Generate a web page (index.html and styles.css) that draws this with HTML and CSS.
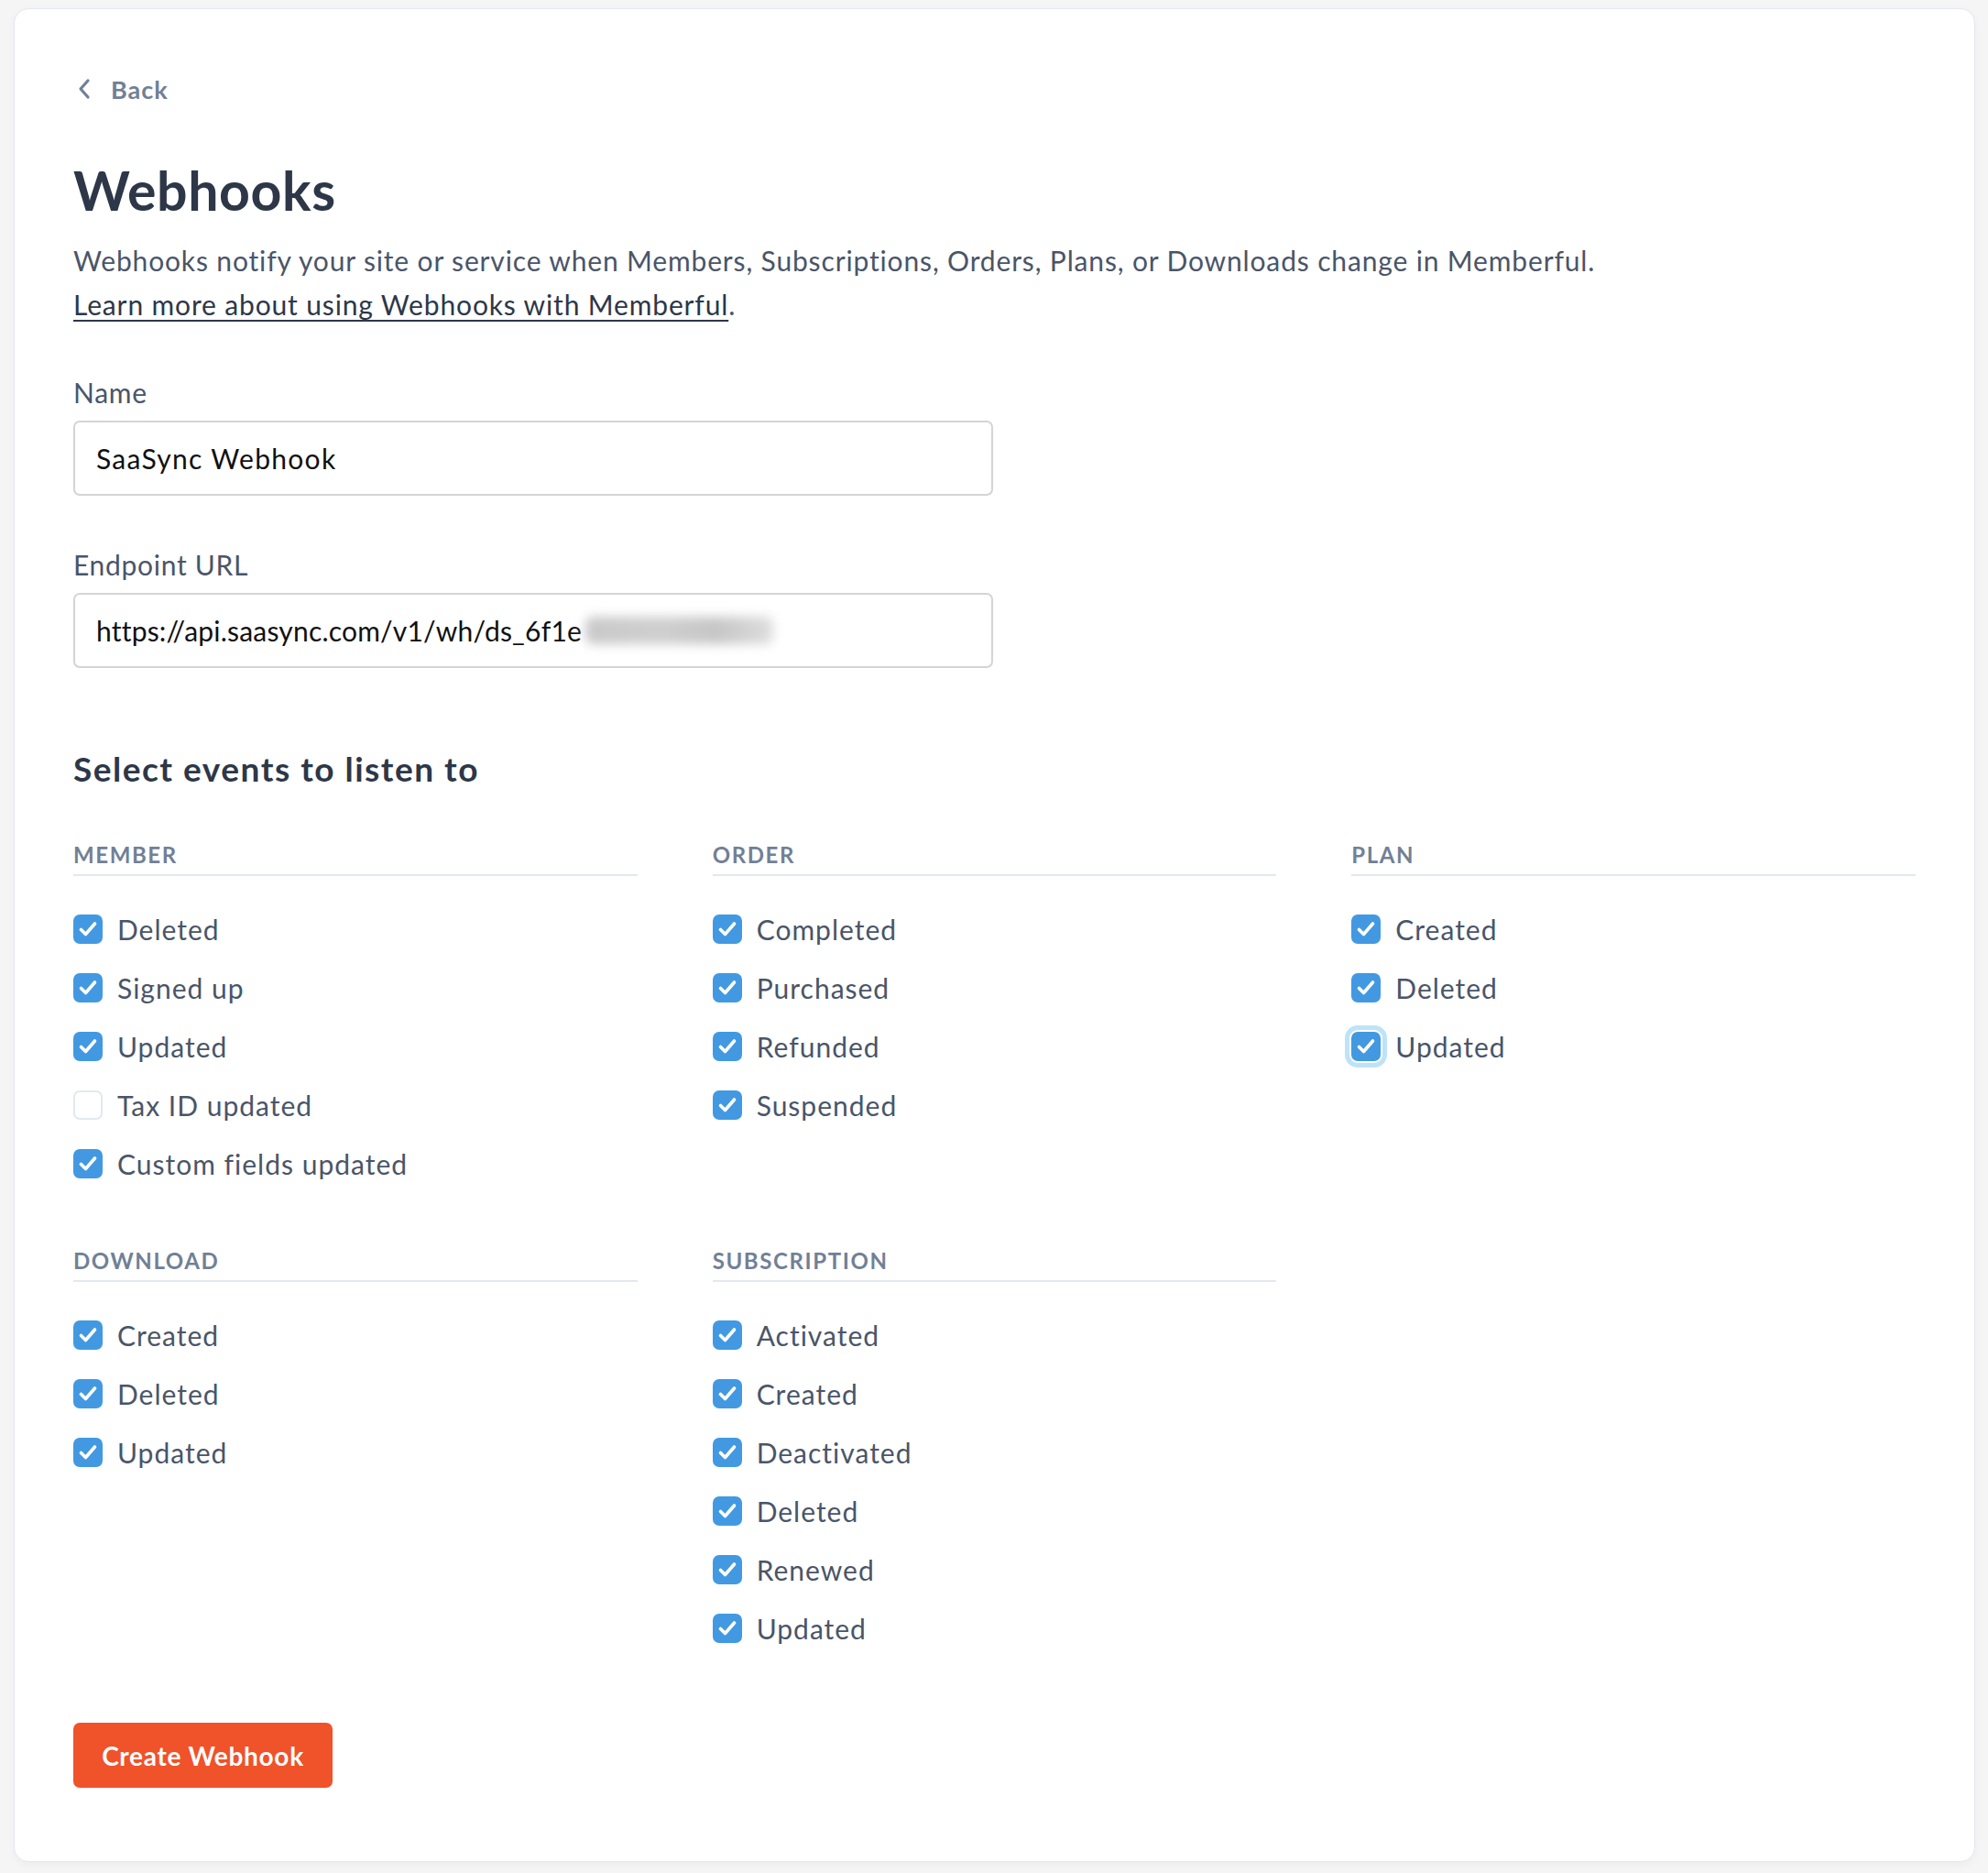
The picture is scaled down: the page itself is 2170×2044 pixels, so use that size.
FILE: index.html
```html
<!DOCTYPE html>
<html lang="en">
<head>
    <meta charset="UTF-8">
    <meta name="viewport" content="width=device-width, initial-scale=1.0">
    <link rel="stylesheet" href="styles.css">
    <title>Webhooks</title>
</head>
<body>
    <div class="card">
        <a class="back" href="#">
            <svg width="18" height="24" viewBox="0 0 18 24"><path d="M13 3 L5 12 L13 21" fill="none" stroke="#718096" stroke-width="3.2" stroke-linecap="round" stroke-linejoin="round"/></svg>
            Back
        </a>

        <h1>Webhooks</h1>
        <p class="intro">
            Webhooks notify your site or service when Members, Subscriptions, Orders, Plans, or Downloads change in Memberful.<br>
            <a href="#">Learn more about using Webhooks with Memberful</a>.
        </p>

        <form>
            <div class="field">
                <label>Name</label>
                <div class="input input-name">SaaSync Webhook</div>
            </div>
            <div class="field field-url">
                <label>Endpoint URL</label>
                <div class="input input-url">https://api.saasync.com/v1/wh/ds_6f1e<span class="blurred"></span></div>
            </div>

            <h2>Select events to listen to</h2>

            <div class="events">
                <div class="group">
                    <h3>Member</h3>
                    <div class="row"><span class="box on"><svg viewBox="0 0 32 32"><path d="M8.5 16.5 L13.5 21.5 L23.5 10"/></svg></span>Deleted</div>
                    <div class="row"><span class="box on"><svg viewBox="0 0 32 32"><path d="M8.5 16.5 L13.5 21.5 L23.5 10"/></svg></span>Signed up</div>
                    <div class="row"><span class="box on"><svg viewBox="0 0 32 32"><path d="M8.5 16.5 L13.5 21.5 L23.5 10"/></svg></span>Updated</div>
                    <div class="row"><span class="box"></span>Tax ID updated</div>
                    <div class="row"><span class="box on"><svg viewBox="0 0 32 32"><path d="M8.5 16.5 L13.5 21.5 L23.5 10"/></svg></span>Custom fields updated</div>
                </div>
                <div class="group">
                    <h3>Order</h3>
                    <div class="row"><span class="box on"><svg viewBox="0 0 32 32"><path d="M8.5 16.5 L13.5 21.5 L23.5 10"/></svg></span>Completed</div>
                    <div class="row"><span class="box on"><svg viewBox="0 0 32 32"><path d="M8.5 16.5 L13.5 21.5 L23.5 10"/></svg></span>Purchased</div>
                    <div class="row"><span class="box on"><svg viewBox="0 0 32 32"><path d="M8.5 16.5 L13.5 21.5 L23.5 10"/></svg></span>Refunded</div>
                    <div class="row"><span class="box on"><svg viewBox="0 0 32 32"><path d="M8.5 16.5 L13.5 21.5 L23.5 10"/></svg></span>Suspended</div>
                </div>
                <div class="group">
                    <h3>Plan</h3>
                    <div class="row"><span class="box on"><svg viewBox="0 0 32 32"><path d="M8.5 16.5 L13.5 21.5 L23.5 10"/></svg></span>Created</div>
                    <div class="row"><span class="box on"><svg viewBox="0 0 32 32"><path d="M8.5 16.5 L13.5 21.5 L23.5 10"/></svg></span>Deleted</div>
                    <div class="row"><span class="box on focus"><svg viewBox="0 0 32 32"><path d="M8.5 16.5 L13.5 21.5 L23.5 10"/></svg></span>Updated</div>
                </div>
                <div class="group">
                    <h3>Download</h3>
                    <div class="row"><span class="box on"><svg viewBox="0 0 32 32"><path d="M8.5 16.5 L13.5 21.5 L23.5 10"/></svg></span>Created</div>
                    <div class="row"><span class="box on"><svg viewBox="0 0 32 32"><path d="M8.5 16.5 L13.5 21.5 L23.5 10"/></svg></span>Deleted</div>
                    <div class="row"><span class="box on"><svg viewBox="0 0 32 32"><path d="M8.5 16.5 L13.5 21.5 L23.5 10"/></svg></span>Updated</div>
                </div>
                <div class="group">
                    <h3>Subscription</h3>
                    <div class="row"><span class="box on"><svg viewBox="0 0 32 32"><path d="M8.5 16.5 L13.5 21.5 L23.5 10"/></svg></span>Activated</div>
                    <div class="row"><span class="box on"><svg viewBox="0 0 32 32"><path d="M8.5 16.5 L13.5 21.5 L23.5 10"/></svg></span>Created</div>
                    <div class="row"><span class="box on"><svg viewBox="0 0 32 32"><path d="M8.5 16.5 L13.5 21.5 L23.5 10"/></svg></span>Deactivated</div>
                    <div class="row"><span class="box on"><svg viewBox="0 0 32 32"><path d="M8.5 16.5 L13.5 21.5 L23.5 10"/></svg></span>Deleted</div>
                    <div class="row"><span class="box on"><svg viewBox="0 0 32 32"><path d="M8.5 16.5 L13.5 21.5 L23.5 10"/></svg></span>Renewed</div>
                    <div class="row"><span class="box on"><svg viewBox="0 0 32 32"><path d="M8.5 16.5 L13.5 21.5 L23.5 10"/></svg></span>Updated</div>
                </div>
            </div>

            <button type="button" class="submit">Create Webhook</button>
        </form>
    </div>
</body>
</html>
```

FILE: styles.css
```css
* {
    margin: 0;
    padding: 0;
    box-sizing: border-box;
}

body {
    background-color: #f5f5f6;
    font-family: Lato, "Open Sans", sans-serif;
    color: #4a5568;
    padding: 9px 14px 12px 15px;
}

.card {
    background-color: #fff;
    border: 1px solid #e3e8f0;
    border-radius: 16px;
    box-shadow: 0 3px 8px rgba(0, 0, 0, 0.04);
    padding: 67px 64px 80px 64px;
}

.back {
    display: flex;
    align-items: center;
    height: 40px;
    color: #718096;
    font-size: 27px;
    font-weight: 700;
    letter-spacing: 1px;
    text-decoration: none;
}

.back svg {
    margin-left: 3px;
    margin-right: 20px;
}

h1 {
    margin-top: 56px;
    font-size: 59px;
    line-height: 70px;
    font-weight: 700;
    letter-spacing: 0.6px;
    color: #2d3748;
}

.intro {
    margin-top: 17px;
    font-size: 30px;
    line-height: 48px;
    letter-spacing: 0.85px;
    color: #4a5568;
}

.intro a {
    color: #2d3748;
    text-decoration-thickness: 2px;
    text-underline-offset: 5px;
}

.field {
    margin-top: 52px;
    width: 1004px;
}

.field-url {
    margin-top: 55px;
}

.field label {
    display: block;
    font-size: 30px;
    line-height: 40px;
    letter-spacing: 0.7px;
    margin-bottom: 11px;
    color: #4a5568;
}

.input {
    display: flex;
    align-items: center;
    height: 82px;
    border: 2px solid #d4d4d6;
    border-radius: 7px;
    padding: 0 23px;
    font-size: 30px;
    color: #111;
}

.input-name {
    letter-spacing: 1.3px;
}

.input-url {
    letter-spacing: 0.2px;
}

.blurred {
    display: inline-block;
    width: 205px;
    height: 30px;
    margin-left: 4px;
    border-radius: 8px;
    background: linear-gradient(90deg, #c9c9c9 0%, #cfcfcf 40%, #c6c6c6 70%, #dedede 100%);
    filter: blur(6px);
}

h2 {
    margin-top: 86px;
    font-size: 37px;
    line-height: 48px;
    font-weight: 700;
    letter-spacing: 1.5px;
    color: #2d3748;
}

.events {
    margin-top: 54px;
    display: grid;
    grid-template-columns: repeat(3, 1fr);
    column-gap: 82px;
    row-gap: 58px;
}

.group h3 {
    font-size: 24px;
    line-height: 32px;
    font-weight: 700;
    text-transform: uppercase;
    letter-spacing: 1.6px;
    color: #718096;
    padding-bottom: 5px;
    border-bottom: 2px solid #e2e8f0;
    margin-bottom: 26px;
}

.row {
    display: flex;
    align-items: center;
    height: 64px;
    font-size: 30px;
    letter-spacing: 1px;
    color: #4a5568;
}

.box {
    width: 32px;
    height: 32px;
    flex-shrink: 0;
    margin-right: 16px;
    border: 2px solid #e2e8f0;
    border-radius: 7px;
    background-color: #fff;
}

.box.on {
    border: none;
    background-color: #4299e1;
}

.box svg {
    display: block;
    width: 32px;
    height: 32px;
    fill: none;
    stroke: #fff;
    stroke-width: 3.6;
    stroke-linecap: round;
    stroke-linejoin: round;
}

.box.focus {
    box-shadow: 0 0 0 2px #fff, 0 0 0 7px #bee3f8;
}

.submit {
    margin-top: 71px;
    width: 283px;
    height: 71px;
    border: none;
    border-radius: 7px;
    background-color: #f0522a;
    color: #fff;
    font-family: inherit;
    font-size: 28px;
    font-weight: 700;
    letter-spacing: 0.7px;
    cursor: pointer;
}
```
